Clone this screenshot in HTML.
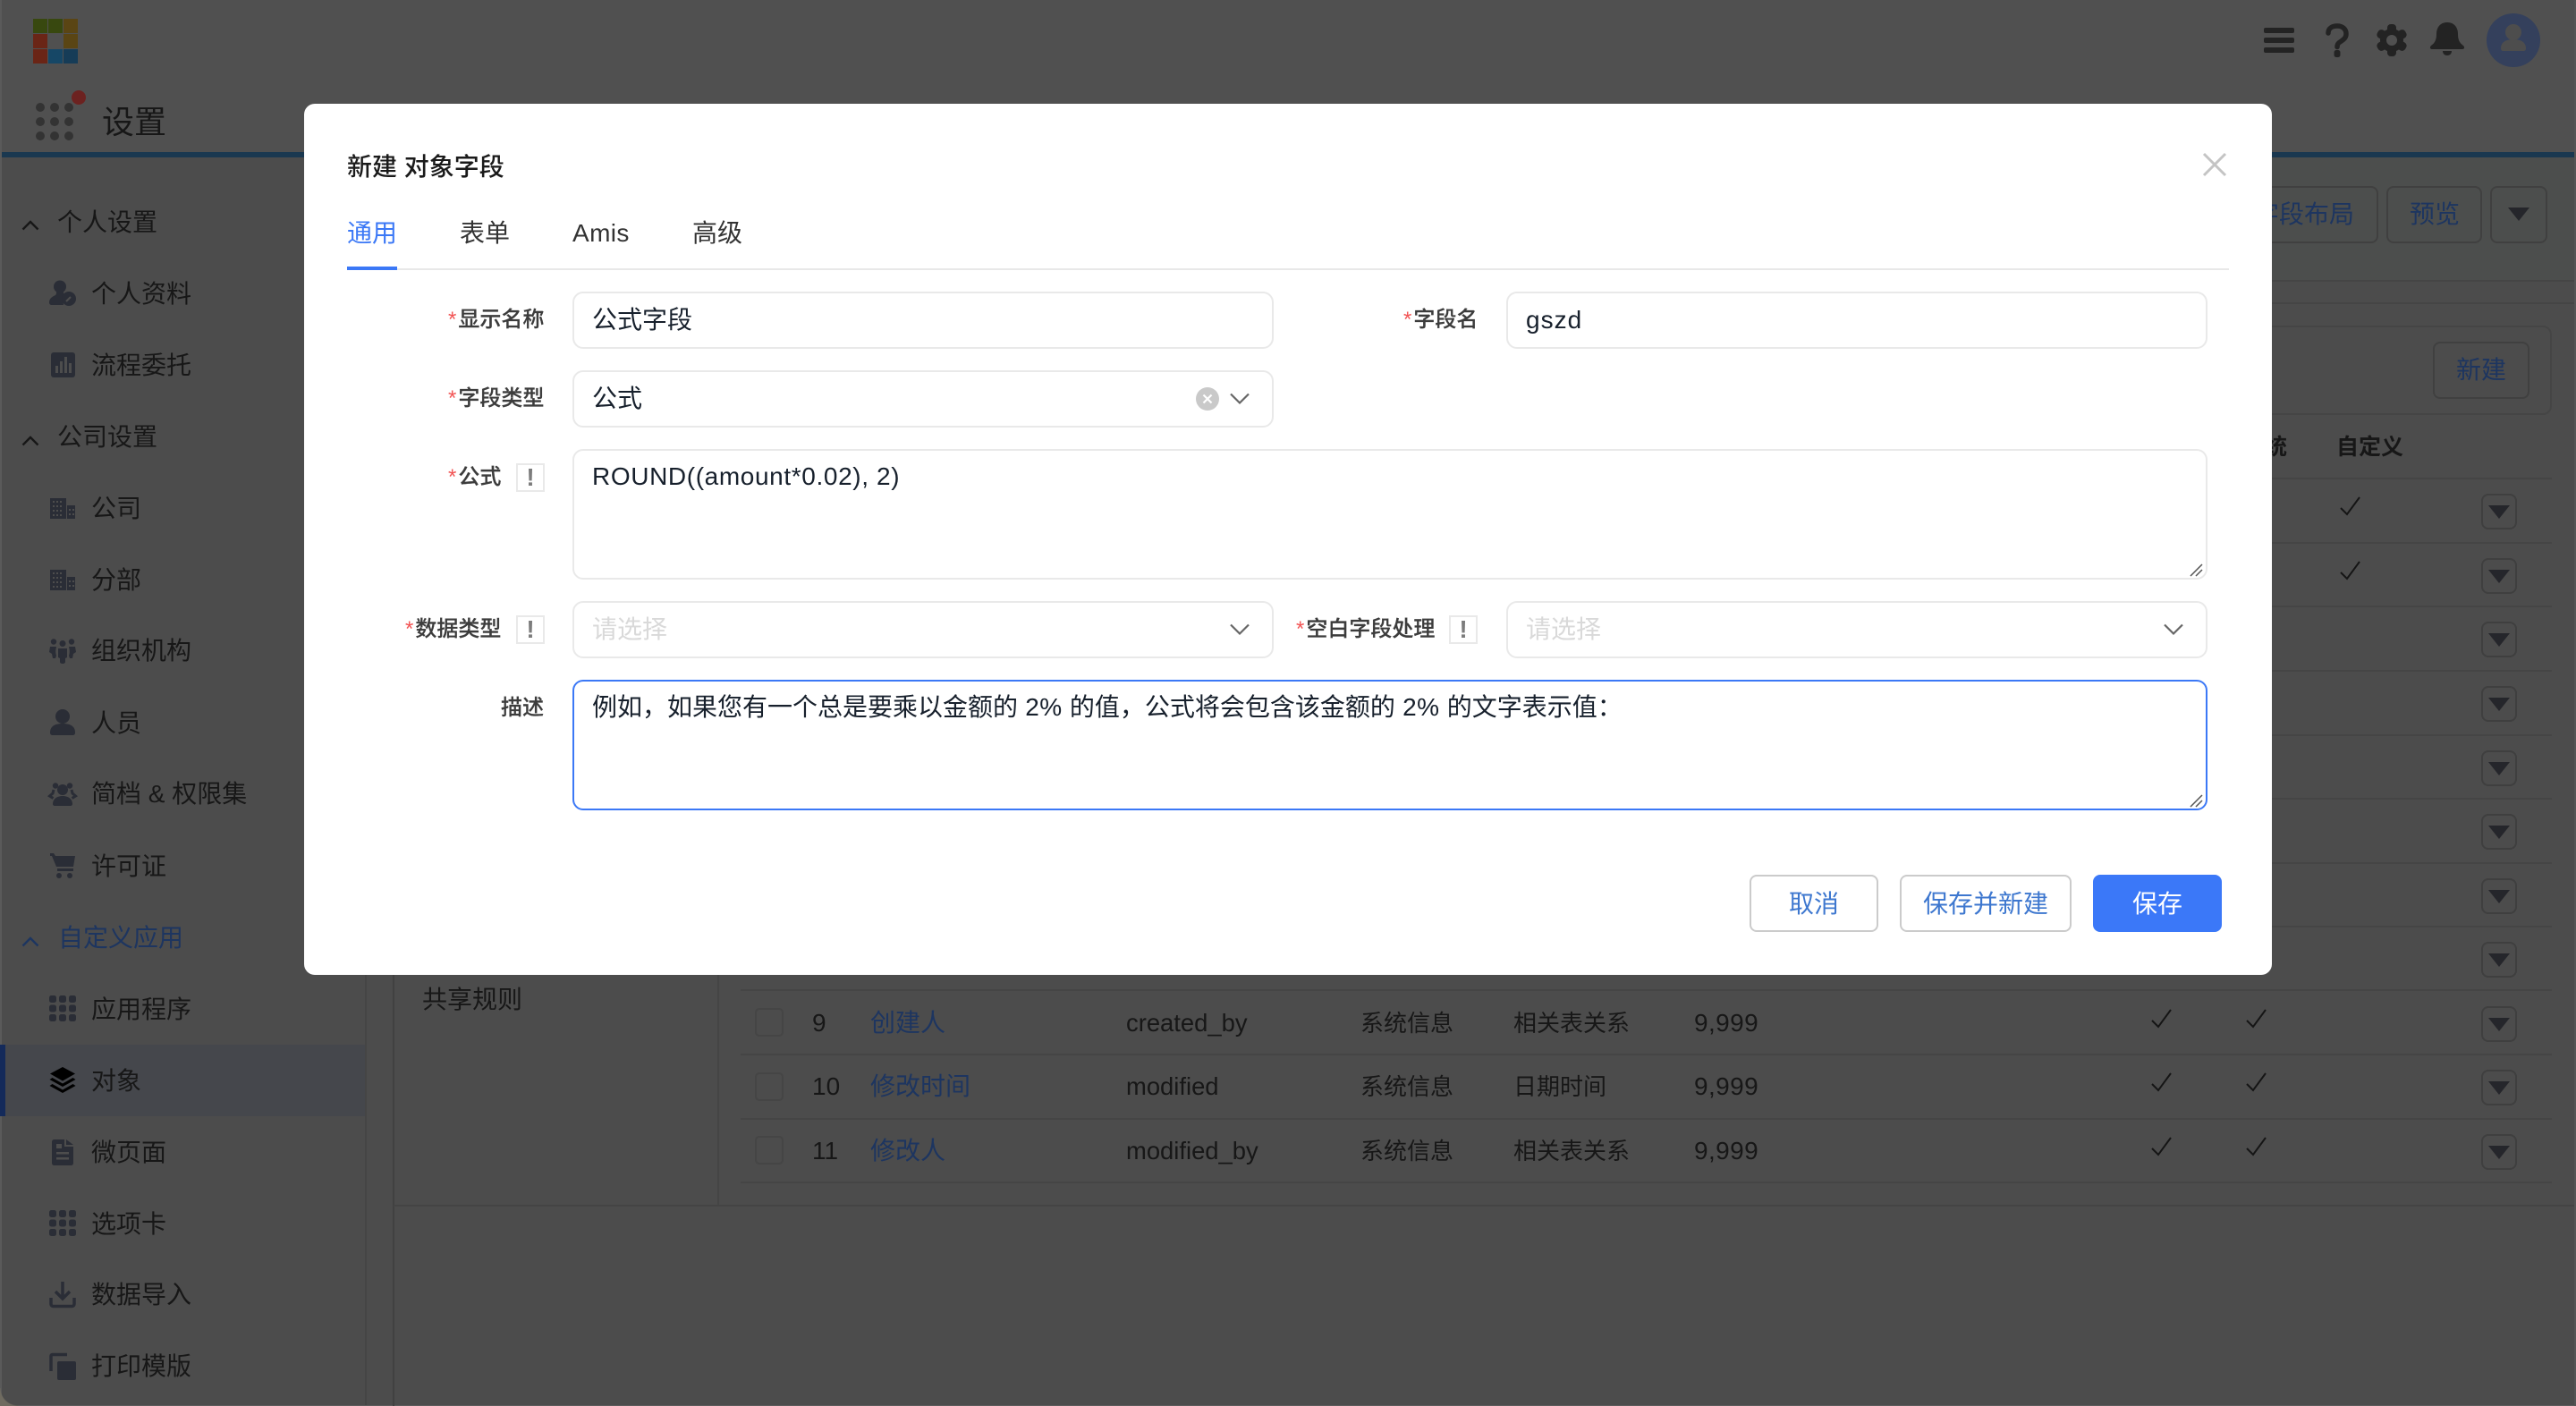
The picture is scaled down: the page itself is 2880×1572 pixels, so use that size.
<!DOCTYPE html>
<html lang="zh"><head><meta charset="utf-8"><title>新建 对象字段</title>
<style>
html,body{margin:0;padding:0}
body{width:2880px;height:1572px;position:relative;overflow:hidden;background:#4c4c4c;font-family:"Liberation Sans","Noto Sans CJK SC",sans-serif;color:#171717;font-size:28px}
.t{position:absolute;white-space:nowrap;line-height:40px;height:40px}
.b{position:absolute;box-sizing:border-box}
svg{position:absolute;overflow:visible}
.l{color:#1d3560}
.ln{position:absolute;height:2px;background:#454545;left:828px;width:2025px}
.cb{position:absolute;left:844px;width:32px;height:32px;box-sizing:border-box;border:2px solid #454545;border-radius:5px}
.dd{position:absolute;left:2774px;width:40px;height:40px;box-sizing:border-box;border:2px solid #3f3f3f;border-radius:8px}
.dd:after{content:"";position:absolute;left:6px;top:11px;border-left:12px solid transparent;border-right:12px solid transparent;border-top:15px solid #25262b}
.inp{position:absolute;box-sizing:border-box;border:2px solid #e9e9e9;border-radius:12px;background:#fff}
.lab{position:absolute;white-space:nowrap;font-size:24px;line-height:32px;color:#3c3c3c;font-weight:500;text-align:right;-webkit-text-stroke:.2px #3c3c3c}
.lab i{font-style:normal;color:#f25555;font-weight:400;margin-right:2px;-webkit-text-stroke:0}
.hp{position:absolute;box-sizing:border-box;width:32px;height:32px;border:2px solid #e9e9e9;color:#7c7c7c;font-weight:700;font-size:28px;line-height:28px;text-align:center}
.v{position:absolute;white-space:nowrap;line-height:40px;color:#17202c}
.ph{position:absolute;white-space:nowrap;line-height:40px;color:#d9d9d9}
.btn{position:absolute;box-sizing:border-box;top:978px;height:64px;border:2px solid #cbcbcb;border-radius:8px;background:#fff;color:#3d77cf;line-height:62px;text-align:center}
.e{font-size:27.4px}
</style></head><body>

<!-- top chrome -->
<div class="b" style="left:0;top:0;width:2880px;height:170px;background:#505050"></div>
<div class="b" style="left:0;top:170px;width:2880px;height:6px;background:#1a3850"></div>
<div class="b" style="left:410px;top:176px;width:2470px;height:137px;background:#4c4e4d"></div>
<div class="b" style="left:410px;top:313px;width:2470px;height:2px;background:#454545"></div>
<div class="b" style="left:410px;top:338px;width:2470px;height:2px;background:#454545"></div>

<!-- logo -->
<svg style="left:37px;top:21px" width="49" height="50">
<rect x="0" y="0" width="16" height="16" fill="#38480f"/><rect x="17" y="0" width="16" height="16" fill="#38480f"/><rect x="34" y="0" width="16" height="16" fill="#5a4514"/>
<rect x="0" y="17" width="16" height="16" fill="#6a2516"/><rect x="34" y="17" width="16" height="16" fill="#5a4514"/>
<rect x="0" y="34" width="16" height="16" fill="#6a2516"/><rect x="17" y="34" width="16" height="16" fill="#164766"/><rect x="34" y="34" width="16" height="16" fill="#163c57"/>
</svg>
<svg style="left:40px;top:100px" width="60" height="60" fill="#333">
<circle cx="5" cy="20" r="5"/><circle cx="21" cy="20" r="5"/><circle cx="37" cy="20" r="5"/>
<circle cx="5" cy="36" r="5"/><circle cx="21" cy="36" r="5"/><circle cx="37" cy="36" r="5"/>
<circle cx="5" cy="52" r="5"/><circle cx="21" cy="52" r="5"/><circle cx="37" cy="52" r="5"/>
<circle cx="48" cy="9" r="8" fill="#6c2220"/></svg>
<div class="t" style="left:114px;top:117px;font-size:36px">设置</div>

<!-- top right icons -->
<svg style="left:2531px;top:31px" width="34" height="28" fill="#232323"><rect y="0" width="34" height="6" rx="2"/><rect y="11" width="34" height="6" rx="2"/><rect y="22" width="34" height="6" rx="2"/></svg>
<svg style="left:2600px;top:26px" width="26" height="38"><path d="M3 11C3 5.500 7.500 3 13 3s10 3 10 9c0 4-2.500 6-5.500 8-3 2-4.500 3-4.500 6.500" fill="none" stroke="#232323" stroke-width="5.500" stroke-linecap="round"/><rect x="9.500" y="30" width="7" height="8" rx="2.500" fill="#232323"/></svg>
<svg style="left:2657px;top:27px" width="34" height="36" viewBox="0 0 34 36"><g fill="#232323"><circle cx="17" cy="18" r="13"/><rect x="12" y="0" width="10" height="36" rx="4"/><rect x="12" y="0" width="10" height="36" rx="4" transform="rotate(60 17 18)"/><rect x="12" y="0" width="10" height="36" rx="4" transform="rotate(120 17 18)"/></g><circle cx="17" cy="18" r="6" fill="#505050"/></svg>
<svg style="left:2717px;top:25px" width="38" height="38" viewBox="0 0 38 38" fill="#232323"><path d="M19 0c8 0 12 6 12 13 0 7 2 10 6 13 2 2 1 4-1 4H2c-2 0-3-2-1-4 4-3 6-6 6-13C7 6 11 0 19 0z"/><path d="M14 32h10c0 3-2 5-5 5s-5-2-5-5z"/></svg>
<div class="b" style="left:2780px;top:15px;width:60px;height:60px;border-radius:50%;background:#34405c"></div>
<svg style="left:2796px;top:27px" width="28" height="32" fill="#4d4d4d"><circle cx="14" cy="9" r="9"/><path d="M0 27c0-7 6-10 14-10s14 3 14 10c0 2-1 3-3 3H3c-2 0-3-1-3-3z"/></svg>

<!-- sidebar -->
<div class="b" style="left:0;top:176px;width:2px;height:1396px;background:#5a5a5a"></div>
<div class="b" style="left:0;top:0;width:2px;height:176px;background:#5a5a5a"></div>
<div class="b" style="left:408px;top:176px;width:2px;height:1396px;background:#454545"></div>
<div class="b" style="left:0;top:1168px;width:408px;height:80px;background:#45474c"></div>
<div class="b" style="left:0;top:1168px;width:6px;height:80px;background:#142a5a"></div>

<svg style="left:24px;top:246px" width="20" height="12"><path d="M1.500 10.500L10 2l8.500 8.500" fill="none" stroke="#171717" stroke-width="2.400"/></svg>
<div class="t" style="left:64px;top:229px">个人设置</div>
<svg style="left:24px;top:487px" width="20" height="12"><path d="M1.500 10.500L10 2l8.500 8.500" fill="none" stroke="#171717" stroke-width="2.400"/></svg>
<div class="t" style="left:64px;top:469px">公司设置</div>
<svg style="left:24px;top:1047px" width="20" height="12"><path d="M1.500 10.500L10 2l8.500 8.500" fill="none" stroke="#1d3560" stroke-width="2.400"/></svg>
<div class="t l" style="left:65px;top:1029px">自定义应用</div>

<div class="t" style="left:102px;top:309px">个人资料</div>
<div class="t" style="left:102px;top:389px">流程委托</div>
<div class="t" style="left:102px;top:549px">公司</div>
<div class="t" style="left:102px;top:629px">分部</div>
<div class="t" style="left:102px;top:708px">组织机构</div>
<div class="t" style="left:102px;top:789px">人员</div>
<div class="t" style="left:102px;top:868px">简档 &amp; 权限集</div>
<div class="t" style="left:102px;top:949px">许可证</div>
<div class="t" style="left:102px;top:1109px">应用程序</div>
<div class="t" style="left:102px;top:1189px">对象</div>
<div class="t" style="left:102px;top:1269px">微页面</div>
<div class="t" style="left:102px;top:1349px">选项卡</div>
<div class="t" style="left:102px;top:1428px">数据导入</div>
<div class="t" style="left:102px;top:1508px">打印模版</div>

<!-- sidebar icons -->
<svg style="left:55px;top:313px" width="30" height="29" fill="#2a2d36"><circle cx="12" cy="7.500" r="7"/><path d="M8 13h8c0 3 1 4 3 5-3 2-4 5-3 10H3c-2 0-3-1-3-3 0-5 5-7 7-8 1-1 1-2 1-4z"/><circle cx="22" cy="21" r="8"/><path d="M19 24l5-5" stroke="#4d4d4d" stroke-width="2"/></svg>
<svg style="left:57px;top:394px" width="27" height="28"><rect width="27" height="28" rx="3" fill="#2a2d36"/><g fill="#4d4d4d"><rect x="5" y="15" width="3" height="8"/><rect x="10" y="10" width="3" height="13"/><rect x="15" y="5" width="3" height="18"/><rect x="20" y="12" width="3" height="11"/></g></svg>
<svg style="left:56px;top:557px" width="28" height="23"><path d="M0 0h18v23H0zM19 8h9v15h-9z" fill="#2a2d36"/><g fill="#4d4d4d"><rect x="3" y="3" width="2" height="2"/><rect x="7" y="3" width="2" height="2"/><rect x="11" y="3" width="2" height="2"/><rect x="3" y="8" width="2" height="2"/><rect x="7" y="8" width="2" height="2"/><rect x="11" y="8" width="2" height="2"/><rect x="3" y="13" width="2" height="2"/><rect x="7" y="13" width="2" height="2"/><rect x="11" y="13" width="2" height="2"/><rect x="3" y="18" width="2" height="2"/><rect x="7" y="18" width="2" height="2"/><rect x="11" y="18" width="2" height="2"/><rect x="21" y="12" width="2" height="2"/><rect x="25" y="12" width="2" height="2"/><rect x="21" y="17" width="2" height="2"/><rect x="25" y="17" width="2" height="2"/></g></svg>
<svg style="left:56px;top:637px" width="28" height="23"><path d="M0 0h18v23H0zM19 8h9v15h-9z" fill="#2a2d36"/><g fill="#4d4d4d"><rect x="3" y="3" width="2" height="2"/><rect x="7" y="3" width="2" height="2"/><rect x="11" y="3" width="2" height="2"/><rect x="3" y="8" width="2" height="2"/><rect x="7" y="8" width="2" height="2"/><rect x="11" y="8" width="2" height="2"/><rect x="3" y="13" width="2" height="2"/><rect x="7" y="13" width="2" height="2"/><rect x="11" y="13" width="2" height="2"/><rect x="3" y="18" width="2" height="2"/><rect x="7" y="18" width="2" height="2"/><rect x="11" y="18" width="2" height="2"/><rect x="21" y="12" width="2" height="2"/><rect x="25" y="12" width="2" height="2"/><rect x="21" y="17" width="2" height="2"/><rect x="25" y="17" width="2" height="2"/></g></svg>
<svg style="left:55px;top:714px" width="30" height="28" fill="#2a2d36"><circle cx="5" cy="3.500" r="3.200"/><circle cx="15" cy="5.500" r="3.500"/><circle cx="25" cy="3.500" r="3.200"/><path d="M10 11h10v10l-2 1v4c0 1-1 2-3 2s-3-1-3-2v-4l-2-1z"/><path d="M1 9h7c-1 4-1 7 0 10l-1 3H4l-1-5-3-2zM29 9h-7c1 4 1 7 0 10l1 3h3l1-5 3-2z"/></svg>
<svg style="left:56px;top:793px" width="28" height="29" fill="#2a2d36"><circle cx="14" cy="8" r="8"/><path d="M0 26c0-8 7-10 14-10s14 2 14 10c0 2-1 3-3 3H3c-2 0-3-1-3-3z"/></svg>
<svg style="left:54px;top:875px" width="32" height="26"><g fill="#2a2d36"><circle cx="16" cy="8" r="6"/><path d="M5 24c0-6 5-9 11-9s11 3 11 9c0 1-1 2-2 2H7c-1 0-2-1-2-2z"/><circle cx="8" cy="3.500" r="3.200"/><circle cx="24" cy="3.500" r="3.200"/></g><path d="M6 8L5 12 1.500 15 5.500 17.500M26 8L27 12 30.500 15 26.500 17.500" fill="none" stroke="#2a2d36" stroke-width="3"/></svg>
<svg style="left:56px;top:954px" width="28" height="28" fill="#2a2d36"><path d="M0 0h4l2 3h22l-2 12H7L2 3H0z"/><rect x="8" y="17" width="18" height="3"/><circle cx="10" cy="25" r="3"/><circle cx="22" cy="25" r="3"/></svg>
<svg style="left:55px;top:1113px" width="30" height="29" fill="#2a2d36"><rect x="0" y="0" width="8" height="8" rx="2.500"/><rect x="11" y="0" width="8" height="8" rx="2.500"/><rect x="22" y="0" width="8" height="8" rx="2.500"/><rect x="0" y="10.500" width="8" height="8" rx="2.500"/><rect x="11" y="10.500" width="8" height="8" rx="2.500"/><rect x="22" y="10.500" width="8" height="8" rx="2.500"/><rect x="0" y="21" width="8" height="8" rx="2.500"/><rect x="11" y="21" width="8" height="8" rx="2.500"/><rect x="22" y="21" width="8" height="8" rx="2.500"/></svg>
<svg style="left:55px;top:1193px" width="30" height="29" fill="#000"><path d="M15 0l14 7.500-14 8-14-8z"/><path d="M3.500 12L15 18.500 26.500 12l3 2L15 22 .500 14z"/><path d="M3.500 19L15 25.500 26.500 19l3 2L15 29 .500 21z"/></svg>
<svg style="left:58px;top:1274px" width="24" height="29"><path d="M3 0h11v8h10v18c0 2-1 3-3 3H3c-2 0-3-1-3-3V3c0-2 1-3 3-3zM16 0l8 6h-8z" fill="#2a2d36"/><rect x="5" y="14" width="14" height="2.500" fill="#4d4d4d"/><rect x="5" y="20" width="14" height="2.500" fill="#4d4d4d"/><rect x="5" y="5" width="6" height="5" fill="#4d4d4d"/></svg>
<svg style="left:55px;top:1353px" width="30" height="29" fill="#2a2d36"><rect x="0" y="0" width="8" height="8" rx="2.500"/><rect x="11" y="0" width="8" height="8" rx="2.500"/><rect x="22" y="0" width="8" height="8" rx="2.500"/><rect x="0" y="10.500" width="8" height="8" rx="2.500"/><rect x="11" y="10.500" width="8" height="8" rx="2.500"/><rect x="22" y="10.500" width="8" height="8" rx="2.500"/><rect x="0" y="21" width="8" height="8" rx="2.500"/><rect x="11" y="21" width="8" height="8" rx="2.500"/><rect x="22" y="21" width="8" height="8" rx="2.500"/></svg>
<svg style="left:55px;top:1433px" width="30" height="29" fill="none" stroke="#2a2d36" stroke-width="3.500"><path d="M15 0v18M7 11l8 8 8-8"/><path d="M2 18v7c0 1.500 1 2.500 2.500 2.500h21c1.500 0 2.500-1 2.500-2.500v-7"/></svg>
<svg style="left:55px;top:1513px" width="30" height="30"><path d="M2 20V3c0-1 1-1.500 1.500-1.500H20" fill="none" stroke="#2a2d36" stroke-width="3.500"/><rect x="9" y="9" width="21" height="21" rx="2" fill="#2a2d36"/></svg>
<div class="b" style="left:0;top:1552px;width:20px;height:20px;background:radial-gradient(circle at 100% 0,transparent 19px,#6f6b60 20px)"></div>
<div class="b" style="left:20px;top:1571px;width:2860px;height:1px;background:#5c5c5c"></div>

<!-- main panel -->
<div class="b" style="left:439px;top:176px;width:2px;height:1396px;background:#414141"></div>
<div class="b" style="left:802px;top:340px;width:2px;height:1008px;background:#454545"></div>
<div class="b" style="left:440px;top:1347px;width:2440px;height:2px;background:#444"></div>
<div class="b" style="left:2878px;top:0;width:2px;height:1572px;background:#555"></div>
<div class="t" style="left:472px;top:1098px">共享规则</div>

<!-- header buttons -->
<div class="b" style="left:2400px;top:208px;width:259px;height:64px;border:2px solid #404040;border-radius:8px"></div>
<div class="t l" style="left:2520px;top:220px">字段布局</div>
<div class="b" style="left:2668px;top:208px;width:107px;height:64px;border:2px solid #404040;border-radius:8px"></div>
<div class="t l" style="left:2694px;top:220px">预览</div>
<div class="b" style="left:2784px;top:208px;width:64px;height:64px;border:2px solid #404040;border-radius:8px"></div>
<div class="b" style="left:2804px;top:232px;border-left:12px solid transparent;border-right:12px solid transparent;border-top:15px solid #25262b"></div>

<!-- list toolbar -->
<div class="b" style="left:828px;top:364px;width:2025px;height:100px;border:2px solid #454545;border-radius:10px"></div>
<div class="b" style="left:2720px;top:382px;width:108px;height:64px;border:2px solid #404040;border-radius:8px"></div>
<div class="t l" style="left:2746px;top:394px">新建</div>
<div class="t" style="left:2507px;top:480px;font-weight:700;font-size:25px">系统</div>
<div class="t" style="left:2612px;top:480px;font-weight:700;font-size:25px">自定义</div>

<!-- row lines -->
<div class="ln" style="top:534px"></div><div class="ln" style="top:606px"></div><div class="ln" style="top:677px"></div><div class="ln" style="top:749px"></div><div class="ln" style="top:821px"></div><div class="ln" style="top:892px"></div><div class="ln" style="top:964px"></div><div class="ln" style="top:1035px"></div><div class="ln" style="top:1106px"></div><div class="ln" style="top:1178px"></div><div class="ln" style="top:1250px"></div><div class="ln" style="top:1321px"></div>

<div class="dd" style="top:552px"></div><div class="dd" style="top:624px"></div><div class="dd" style="top:695px"></div><div class="dd" style="top:767px"></div><div class="dd" style="top:839px"></div><div class="dd" style="top:910px"></div><div class="dd" style="top:982px"></div><div class="dd" style="top:1053px"></div><div class="dd" style="top:1125px"></div><div class="dd" style="top:1196px"></div><div class="dd" style="top:1268px"></div>

<svg style="left:2616px;top:555px" width="23" height="21"><path d="M1 13l7 7L22 1" fill="none" stroke="#151515" stroke-width="2"/></svg>
<svg style="left:2616px;top:627px" width="23" height="21"><path d="M1 13l7 7L22 1" fill="none" stroke="#151515" stroke-width="2"/></svg>
<svg style="left:2405px;top:1128px" width="23" height="21"><path d="M1 13l7 7L22 1" fill="none" stroke="#151515" stroke-width="2"/></svg>
<svg style="left:2511px;top:1128px" width="23" height="21"><path d="M1 13l7 7L22 1" fill="none" stroke="#151515" stroke-width="2"/></svg>
<svg style="left:2405px;top:1199px" width="23" height="21"><path d="M1 13l7 7L22 1" fill="none" stroke="#151515" stroke-width="2"/></svg>
<svg style="left:2511px;top:1199px" width="23" height="21"><path d="M1 13l7 7L22 1" fill="none" stroke="#151515" stroke-width="2"/></svg>
<svg style="left:2405px;top:1271px" width="23" height="21"><path d="M1 13l7 7L22 1" fill="none" stroke="#151515" stroke-width="2"/></svg>
<svg style="left:2511px;top:1271px" width="23" height="21"><path d="M1 13l7 7L22 1" fill="none" stroke="#151515" stroke-width="2"/></svg>

<div class="cb" style="top:1127px"></div><div class="cb" style="top:1199px"></div><div class="cb" style="top:1270px"></div>
<div class="t" style="left:908px;top:1124px">9</div>
<div class="t l" style="left:973px;top:1124px">创建人</div>
<div class="t e" style="left:1259px;top:1124px">created_by</div>
<div class="t" style="left:1521px;top:1124px;font-size:26px">系统信息</div>
<div class="t" style="left:1692px;top:1124px;font-size:26px">相关表关系</div>
<div class="t" style="left:1894px;top:1124px;letter-spacing:.4px">9,999</div>
<div class="t" style="left:908px;top:1195px">10</div>
<div class="t l" style="left:973px;top:1195px">修改时间</div>
<div class="t e" style="left:1259px;top:1195px">modified</div>
<div class="t" style="left:1521px;top:1195px;font-size:26px">系统信息</div>
<div class="t" style="left:1692px;top:1195px;font-size:26px">日期时间</div>
<div class="t" style="left:1894px;top:1195px;letter-spacing:.4px">9,999</div>
<div class="t" style="left:908px;top:1267px">11</div>
<div class="t l" style="left:973px;top:1267px">修改人</div>
<div class="t e" style="left:1259px;top:1267px">modified_by</div>
<div class="t" style="left:1521px;top:1267px;font-size:26px">系统信息</div>
<div class="t" style="left:1692px;top:1267px;font-size:26px">相关表关系</div>
<div class="t" style="left:1894px;top:1267px;letter-spacing:.4px">9,999</div>

<!-- modal -->
<div class="b" style="left:340px;top:116px;width:2200px;height:974px;background:#fff;border-radius:12px"></div>
<div class="t" style="left:388px;top:167px;font-weight:500;color:#1a1a1a">新建 对象字段</div>
<svg style="left:2463px;top:171px" width="26" height="26"><path d="M1 1l24 24M25 1L1 25" stroke="#c4c4c4" stroke-width="3" fill="none"/></svg>

<div class="t" style="left:388px;top:241px;color:#3b78f6">通用</div>
<div class="t" style="left:514px;top:241px;color:#333">表单</div>
<div class="t" style="left:640px;top:241px;color:#333;letter-spacing:.4px">Amis</div>
<div class="t" style="left:774px;top:241px;color:#333">高级</div>
<div class="b" style="left:388px;top:300px;width:2104px;height:2px;background:#e8e8e8"></div>
<div class="b" style="left:388px;top:298px;width:56px;height:4px;background:#3b78f6"></div>

<!-- row 1 -->
<div class="lab" style="left:501px;top:342px"><i>*</i>显示名称</div>
<div class="inp" style="left:640px;top:326px;width:784px;height:64px"></div>
<div class="v" style="left:662px;top:338px">公式字段</div>
<div class="lab" style="left:1569px;top:342px"><i>*</i>字段名</div>
<div class="inp" style="left:1684px;top:326px;width:784px;height:64px"></div>
<div class="v" style="left:1706px;top:338px;letter-spacing:1px">gszd</div>

<!-- row 2 -->
<div class="lab" style="left:501px;top:430px"><i>*</i>字段类型</div>
<div class="inp" style="left:640px;top:414px;width:784px;height:64px"></div>
<div class="v" style="left:662px;top:426px">公式</div>
<svg style="left:1337px;top:433px" width="26" height="26"><circle cx="13" cy="13" r="13" fill="#c9c9c9"/><path d="M8.500 8.500l9 9M17.500 8.500l-9 9" stroke="#fff" stroke-width="2.200"/></svg>
<svg style="left:1375px;top:439px" width="22" height="14"><path d="M1 1.500l10 10 10-10" fill="none" stroke="#666" stroke-width="2.200"/></svg>

<!-- row 3 -->
<div class="lab" style="left:501px;top:518px"><i>*</i>公式</div>
<div class="hp" style="left:577px;top:518px">!</div>
<div class="inp" style="left:640px;top:502px;width:1828px;height:146px"></div>
<div class="v" style="left:662px;top:513px;letter-spacing:.62px">ROUND((amount*0.02), 2)</div>
<svg style="left:2448px;top:630px" width="14" height="14"><path d="M1 14L14 1M7 14l7-7" stroke="#555" stroke-width="1.500"/></svg>

<!-- row 4 -->
<div class="lab" style="left:453px;top:688px"><i>*</i>数据类型</div>
<div class="hp" style="left:577px;top:688px">!</div>
<div class="inp" style="left:640px;top:672px;width:784px;height:64px"></div>
<div class="ph" style="left:662px;top:684px">请选择</div>
<svg style="left:1375px;top:697px" width="22" height="14"><path d="M1 1.500l10 10 10-10" fill="none" stroke="#666" stroke-width="2.200"/></svg>
<div class="lab" style="left:1449px;top:688px"><i>*</i>空白字段处理</div>
<div class="hp" style="left:1620px;top:688px">!</div>
<div class="inp" style="left:1684px;top:672px;width:784px;height:64px"></div>
<div class="ph" style="left:1706px;top:684px">请选择</div>
<svg style="left:2419px;top:697px" width="22" height="14"><path d="M1 1.500l10 10 10-10" fill="none" stroke="#666" stroke-width="2.200"/></svg>

<!-- row 5 -->
<div class="lab" style="left:560px;top:776px">描述</div>
<div class="inp" style="left:640px;top:760px;width:1828px;height:146px;border-color:#3b78f6"></div>
<div class="v" style="left:662px;top:771px">例如，如果您有一个总是要乘以金额的<span style="letter-spacing:.45px"> 2% </span>的值，公式将会包含该金额的<span style="letter-spacing:.45px"> 2% </span>的文字表示值：</div>
<svg style="left:2448px;top:888px" width="14" height="14"><path d="M1 14L14 1M7 14l7-7" stroke="#555" stroke-width="1.500"/></svg>

<!-- footer buttons -->
<div class="btn" style="left:1956px;width:144px">取消</div>
<div class="btn" style="left:2124px;width:192px">保存并新建</div>
<div class="btn" style="left:2340px;width:144px;background:#3b78f8;border-color:#3b78f8;color:#fff">保存</div>

</body></html>
